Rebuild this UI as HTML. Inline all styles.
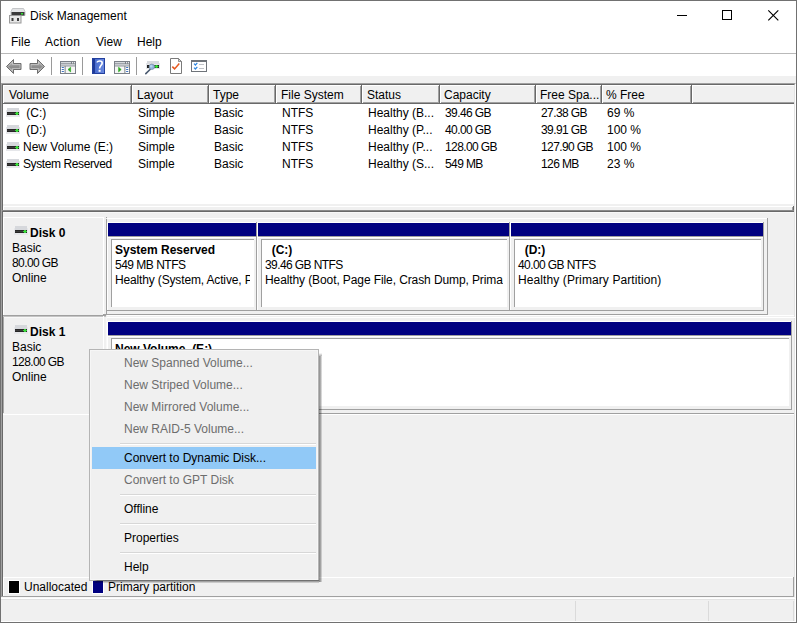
<!DOCTYPE html>
<html><head><meta charset="utf-8">
<style>
*{box-sizing:border-box;margin:0;padding:0}
html,body{width:797px;height:623px;overflow:hidden;background:#f0f0f0}
body{position:relative;font-family:"Liberation Sans",sans-serif;font-size:12px;color:#000}
.a{position:absolute}
.t{position:absolute;line-height:14px;white-space:nowrap}
.b{font-weight:bold}
.g{color:#6d6d6d}
svg{position:absolute;overflow:visible}
</style></head><body>

<div class="a" style="left:0px;top:0px;width:797px;height:623px;background:#f0f0f0;border:1px solid #717171"></div>
<div class="a" style="left:1px;top:1px;width:795px;height:75px;background:#fff"></div>
<div class="a" style="left:1px;top:53px;width:795px;height:1px;background:#b9b9b9"></div>
<svg style="left:9px;top:8px" width="17" height="16" viewBox="0 0 17 16">
<path d="M3.5 0.5h11l1.5 3v4h-14v-4z" fill="#e3e4e6" stroke="#c4c6c8" stroke-width="1"/>
<rect x="2.5" y="4" width="13" height="3.5" fill="#3a3a3a"/>
<rect x="12" y="5" width="2" height="1.5" fill="#2fe02f"/>
<rect x="0.5" y="7.5" width="11.5" height="7.5" fill="#e6e6e6" stroke="#9a9a9a"/>
<rect x="2.5" y="10" width="2" height="3" fill="#3c3c3c"/>
<rect x="8" y="10" width="2" height="3" fill="#3c3c3c"/>
</svg>
<div class="t" style="left:30px;top:9px;">Disk Management</div>
<div class="t" style="left:11px;top:35px;">File</div>
<div class="t" style="left:45px;top:35px;letter-spacing:0.3px">Action</div>
<div class="t" style="left:96px;top:35px;">View</div>
<div class="t" style="left:137px;top:35px;">Help</div>
<div class="a" style="left:677px;top:15px;width:10px;height:1px;background:#000"></div>
<div class="a" style="left:722px;top:10px;width:10px;height:10px;border:1px solid #000"></div>
<svg style="left:768px;top:10px" width="11" height="11" viewBox="0 0 11 11"><path d="M0.3 0.3L10.3 10.3M10.3 0.3L0.3 10.3" stroke="#000" stroke-width="1.15"/></svg>
<div class="a" style="left:51px;top:57px;width:1px;height:18px;background:#9a9a9a"></div>
<div class="a" style="left:82px;top:57px;width:1px;height:18px;background:#9a9a9a"></div>
<div class="a" style="left:136px;top:57px;width:1px;height:18px;background:#9a9a9a"></div>
<svg style="left:6px;top:59px" width="17" height="15" viewBox="0 0 17 15">
<defs><linearGradient id="ag" x1="0" y1="0" x2="0" y2="1"><stop offset="0" stop-color="#c8c8c8"/><stop offset="0.55" stop-color="#8a8a8a"/><stop offset="1" stop-color="#bdbdbd"/></linearGradient></defs>
<path d="M0.5 7.5L7.5 0.5V4.5H15V10.5H7.5V14.5Z" fill="url(#ag)" stroke="#6e6e6e" stroke-linejoin="round"/>
<path d="M2 7.5L6.5 3V5.5H14V9.5H6.5V12Z" fill="none" stroke="#e0e0e0" stroke-width="0.6" opacity="0.8"/></svg>
<svg style="left:28px;top:59px" width="17" height="15" viewBox="0 0 17 15">
<path d="M16.5 7.5L9.5 0.5V4.5H2V10.5H9.5V14.5Z" fill="url(#ag)" stroke="#6e6e6e" stroke-linejoin="round"/>
<path d="M15 7.5L10.5 3V5.5H3V9.5H10.5V12Z" fill="none" stroke="#e0e0e0" stroke-width="0.6" opacity="0.8"/></svg>
<svg style="left:60px;top:61px" width="16" height="13" viewBox="0 0 16 13">
<rect x="0" y="0" width="16" height="13" fill="#7b8088"/>
<rect x="1" y="1" width="10" height="1.4" fill="#d5d8dc"/>
<rect x="12" y="1" width="1.2" height="1.4" fill="#e8eaec"/><rect x="14" y="1" width="1" height="1.4" fill="#e8eaec"/>
<rect x="1" y="3.2" width="14" height="1.4" fill="#dadde0"/>
<rect x="1" y="5.4" width="3.6" height="6.6" fill="#fff"/>
<rect x="5.6" y="5.4" width="9.4" height="6.6" fill="#f6f6f6"/>
<rect x="1.6" y="6" width="2.4" height="1" rx="0.5" fill="#3f74c0"/><rect x="1.6" y="8" width="2.4" height="1" rx="0.5" fill="#3f74c0"/><rect x="1.6" y="10" width="2.4" height="1" rx="0.5" fill="#3f74c0"/>
<path d="M8 8.5L10.6 6.2V10.9Z" fill="#2aa81e" stroke="#2aa81e" stroke-width="0.6" stroke-linejoin="round"/></svg>
<svg style="left:114px;top:61px" width="16" height="13" viewBox="0 0 16 13">
<rect x="0" y="0" width="16" height="13" fill="#7b8088"/>
<rect x="1" y="1" width="10" height="1.4" fill="#d5d8dc"/>
<rect x="12" y="1" width="1.2" height="1.4" fill="#e8eaec"/><rect x="14" y="1" width="1" height="1.4" fill="#e8eaec"/>
<rect x="1" y="3.2" width="14" height="1.4" fill="#dadde0"/>
<rect x="11.4" y="5.4" width="3.6" height="6.6" fill="#fff"/>
<rect x="1" y="5.4" width="9.4" height="6.6" fill="#f6f6f6"/>
<rect x="12" y="6" width="2.4" height="1" rx="0.5" fill="#3f74c0"/><rect x="12" y="8" width="2.4" height="1" rx="0.5" fill="#3f74c0"/><rect x="12" y="10" width="2.4" height="1" rx="0.5" fill="#3f74c0"/>
<path d="M7.2 8.5L4.6 6.2V10.9Z" fill="#2aa81e" stroke="#2aa81e" stroke-width="0.6" stroke-linejoin="round"/></svg>
<svg style="left:92px;top:58px" width="13" height="16" viewBox="0 0 13 16">
<defs><linearGradient id="hg" x1="0" y1="0" x2="1" y2="0"><stop offset="0" stop-color="#3f63c8"/><stop offset="1" stop-color="#6a8ae0"/></linearGradient></defs>
<rect x="0.5" y="0.5" width="12" height="15" fill="url(#hg)" stroke="#23409e"/>
<rect x="1" y="1" width="2" height="14" fill="#1f3a98"/>
<path d="M5.2 4.6C5.2 2.4 10.2 2.3 10.2 4.9C10.2 7.2 7.6 7.4 7.6 10.6" fill="none" stroke="#fff" stroke-width="1.6"/>
<rect x="6.6" y="11.8" width="2" height="2" fill="#fff"/></svg>
<svg style="left:145px;top:61px" width="16" height="14" viewBox="0 0 16 14">
<rect x="1" y="2" width="14" height="6" fill="#e4e6ea"/>
<rect x="2" y="0" width="12" height="3" fill="#d8dade"/>
<rect x="2" y="4" width="12" height="3" fill="#1e1e1e"/>
<rect x="10.5" y="4" width="2" height="3" fill="#2fe02f"/><rect x="9.5" y="5" width="4" height="1" fill="#2fe02f"/>
<path d="M5.3 8.2L0.8 12.6" stroke="#4a5a70" stroke-width="1.6" stroke-linecap="round"/>
<circle cx="6.8" cy="5.8" r="2.7" fill="#8fb4dc" stroke="#7f93a8" stroke-width="0.8"/>
<circle cx="6.2" cy="5.2" r="1.2" fill="#b8d4ee"/></svg>
<svg style="left:170px;top:58px" width="12" height="16" viewBox="0 0 12 16">
<path d="M0.5 0.5H8.5L11.5 3.5V15.5H0.5Z" fill="#fff" stroke="#7a7a7a" stroke-linejoin="miter"/>
<path d="M8.5 0.5V3.5H11.5Z" fill="#d8d8d8" stroke="#7a7a7a" stroke-width="0.8"/>
<path d="M2.3 8.6L4.6 10.9L9.3 5.6" fill="none" stroke="#e8581e" stroke-width="1.5"/></svg>
<svg style="left:191px;top:60px" width="16" height="12" viewBox="0 0 16 12">
<rect x="0.5" y="0.5" width="15" height="11" fill="#fff" stroke="#6f747a"/>
<rect x="1" y="1" width="14" height="1" fill="#6f747a"/>
<path d="M3 3.6L4.4 5L6.3 2.8" fill="none" stroke="#2f86e0" stroke-width="1.2"/>
<path d="M3 7.6L4.4 9L6.3 6.8" fill="none" stroke="#2f86e0" stroke-width="1.2"/>
<rect x="8" y="4" width="5" height="1" fill="#c0c3c8"/><rect x="8" y="8" width="5" height="1" fill="#c0c3c8"/></svg>
<div class="a" style="left:1px;top:83px;width:795px;height:128px;border-top:1px solid #a0a0a0;border-left:1px solid #a0a0a0;border-right:1px solid #fff;background:#fff"></div>
<div class="a" style="left:2px;top:84px;width:793px;height:127px;border-top:1px solid #696969;border-left:1px solid #696969;border-right:1px solid #e3e3e3;background:#fff"></div>
<div class="a" style="left:3px;top:85px;width:791px;height:19px;background:#f0f0f0;border-top:1px solid #fff;border-bottom:1px solid #696969"></div>
<div class="a" style="left:3px;top:102px;width:791px;height:1px;background:#a0a0a0"></div>
<div class="a" style="left:130px;top:86px;width:1px;height:17px;background:#a0a0a0"></div>
<div class="a" style="left:131px;top:85px;width:1px;height:19px;background:#696969"></div>
<div class="a" style="left:132px;top:86px;width:1px;height:17px;background:#fff"></div>
<div class="a" style="left:207px;top:86px;width:1px;height:17px;background:#a0a0a0"></div>
<div class="a" style="left:208px;top:85px;width:1px;height:19px;background:#696969"></div>
<div class="a" style="left:209px;top:86px;width:1px;height:17px;background:#fff"></div>
<div class="a" style="left:274px;top:86px;width:1px;height:17px;background:#a0a0a0"></div>
<div class="a" style="left:275px;top:85px;width:1px;height:19px;background:#696969"></div>
<div class="a" style="left:276px;top:86px;width:1px;height:17px;background:#fff"></div>
<div class="a" style="left:360px;top:86px;width:1px;height:17px;background:#a0a0a0"></div>
<div class="a" style="left:361px;top:85px;width:1px;height:19px;background:#696969"></div>
<div class="a" style="left:362px;top:86px;width:1px;height:17px;background:#fff"></div>
<div class="a" style="left:438px;top:86px;width:1px;height:17px;background:#a0a0a0"></div>
<div class="a" style="left:439px;top:85px;width:1px;height:19px;background:#696969"></div>
<div class="a" style="left:440px;top:86px;width:1px;height:17px;background:#fff"></div>
<div class="a" style="left:534px;top:86px;width:1px;height:17px;background:#a0a0a0"></div>
<div class="a" style="left:535px;top:85px;width:1px;height:19px;background:#696969"></div>
<div class="a" style="left:536px;top:86px;width:1px;height:17px;background:#fff"></div>
<div class="a" style="left:600px;top:86px;width:1px;height:17px;background:#a0a0a0"></div>
<div class="a" style="left:601px;top:85px;width:1px;height:19px;background:#696969"></div>
<div class="a" style="left:602px;top:86px;width:1px;height:17px;background:#fff"></div>
<div class="a" style="left:690px;top:86px;width:1px;height:17px;background:#a0a0a0"></div>
<div class="a" style="left:691px;top:85px;width:1px;height:19px;background:#696969"></div>
<div class="a" style="left:692px;top:86px;width:1px;height:17px;background:#fff"></div>
<div class="a" style="left:3px;top:86px;width:1px;height:17px;background:#fff"></div>
<div class="t" style="left:9px;top:88px;">Volume</div>
<div class="t" style="left:137px;top:88px;">Layout</div>
<div class="t" style="left:213px;top:88px;">Type</div>
<div class="t" style="left:281px;top:88px;">File System</div>
<div class="t" style="left:367px;top:88px;">Status</div>
<div class="t" style="left:444px;top:88px;">Capacity</div>
<div class="t" style="left:540px;top:88px;">Free Spa...</div>
<div class="t" style="left:606px;top:88px;">% Free</div>
<svg style="left:6px;top:108px" width="14" height="9" viewBox="0 0 14 9">
<rect x="0" y="2" width="14" height="7" fill="#e6e7ea"/>
<rect x="1" y="0" width="12" height="4" fill="#d6d8dc"/>
<rect x="1" y="4" width="12" height="3" fill="#262626"/>
<rect x="1" y="5" width="8" height="0.6" fill="#4a4a4a"/>
<rect x="10" y="4" width="2" height="3" fill="#39d839"/><rect x="9" y="5" width="4" height="1" fill="#39d839"/></svg>
<div class="t" style="left:23px;top:106px;">&nbsp;(C:)</div>
<div class="t" style="left:138px;top:106px;">Simple</div>
<div class="t" style="left:214px;top:106px;">Basic</div>
<div class="t" style="left:282px;top:106px;">NTFS</div>
<div class="t" style="left:368px;top:106px;">Healthy (B...</div>
<div class="t" style="left:445px;top:106px;letter-spacing:-0.6px">39.46 GB</div>
<div class="t" style="left:541px;top:106px;letter-spacing:-0.6px">27.38 GB</div>
<div class="t" style="left:607px;top:106px;">69 %</div>
<svg style="left:6px;top:125px" width="14" height="9" viewBox="0 0 14 9">
<rect x="0" y="2" width="14" height="7" fill="#e6e7ea"/>
<rect x="1" y="0" width="12" height="4" fill="#d6d8dc"/>
<rect x="1" y="4" width="12" height="3" fill="#262626"/>
<rect x="1" y="5" width="8" height="0.6" fill="#4a4a4a"/>
<rect x="10" y="4" width="2" height="3" fill="#39d839"/><rect x="9" y="5" width="4" height="1" fill="#39d839"/></svg>
<div class="t" style="left:23px;top:123px;">&nbsp;(D:)</div>
<div class="t" style="left:138px;top:123px;">Simple</div>
<div class="t" style="left:214px;top:123px;">Basic</div>
<div class="t" style="left:282px;top:123px;">NTFS</div>
<div class="t" style="left:368px;top:123px;">Healthy (P...</div>
<div class="t" style="left:445px;top:123px;letter-spacing:-0.6px">40.00 GB</div>
<div class="t" style="left:541px;top:123px;letter-spacing:-0.6px">39.91 GB</div>
<div class="t" style="left:607px;top:123px;">100 %</div>
<svg style="left:6px;top:142px" width="14" height="9" viewBox="0 0 14 9">
<rect x="0" y="2" width="14" height="7" fill="#e6e7ea"/>
<rect x="1" y="0" width="12" height="4" fill="#d6d8dc"/>
<rect x="1" y="4" width="12" height="3" fill="#262626"/>
<rect x="1" y="5" width="8" height="0.6" fill="#4a4a4a"/>
<rect x="10" y="4" width="2" height="3" fill="#39d839"/><rect x="9" y="5" width="4" height="1" fill="#39d839"/></svg>
<div class="t" style="left:23px;top:140px;">New Volume&nbsp;(E:)</div>
<div class="t" style="left:138px;top:140px;">Simple</div>
<div class="t" style="left:214px;top:140px;">Basic</div>
<div class="t" style="left:282px;top:140px;">NTFS</div>
<div class="t" style="left:368px;top:140px;">Healthy (P...</div>
<div class="t" style="left:445px;top:140px;letter-spacing:-0.6px">128.00 GB</div>
<div class="t" style="left:541px;top:140px;letter-spacing:-0.6px">127.90 GB</div>
<div class="t" style="left:607px;top:140px;">100 %</div>
<svg style="left:6px;top:159px" width="14" height="9" viewBox="0 0 14 9">
<rect x="0" y="2" width="14" height="7" fill="#e6e7ea"/>
<rect x="1" y="0" width="12" height="4" fill="#d6d8dc"/>
<rect x="1" y="4" width="12" height="3" fill="#262626"/>
<rect x="1" y="5" width="8" height="0.6" fill="#4a4a4a"/>
<rect x="10" y="4" width="2" height="3" fill="#39d839"/><rect x="9" y="5" width="4" height="1" fill="#39d839"/></svg>
<div class="t" style="left:23px;top:157px;letter-spacing:-0.4px">System Reserved</div>
<div class="t" style="left:138px;top:157px;">Simple</div>
<div class="t" style="left:214px;top:157px;">Basic</div>
<div class="t" style="left:282px;top:157px;">NTFS</div>
<div class="t" style="left:368px;top:157px;">Healthy (S...</div>
<div class="t" style="left:445px;top:157px;letter-spacing:-0.6px">549 MB</div>
<div class="t" style="left:541px;top:157px;letter-spacing:-0.6px">126 MB</div>
<div class="t" style="left:607px;top:157px;">23 %</div>
<div class="a" style="left:3px;top:204px;width:791px;height:2px;background:#f0f0f0"></div>
<div class="a" style="left:3px;top:206px;width:790px;height:1px;background:#fff"></div>
<div class="a" style="left:3px;top:207px;width:790px;height:3px;background:#f0f0f0"></div>
<div class="a" style="left:3px;top:206px;width:1px;height:4px;background:#fff"></div>
<div class="a" style="left:792px;top:207px;width:1px;height:3px;background:#a0a0a0"></div>
<div class="a" style="left:793px;top:206px;width:1px;height:6px;background:#696969"></div>
<div class="a" style="left:1px;top:210px;width:793px;height:1px;background:#8a8a8a"></div>
<div class="a" style="left:1px;top:211px;width:793px;height:1px;background:#696969"></div>
<div class="a" style="left:1px;top:210px;width:1px;height:387px;background:#a0a0a0"></div>
<div class="a" style="left:2px;top:211px;width:1px;height:386px;background:#696969"></div>
<div class="a" style="left:795px;top:210px;width:1px;height:387px;background:#fff"></div>
<div class="a" style="left:794px;top:204px;width:1px;height:393px;background:#e3e3e3"></div>
<div class="a" style="left:3px;top:212px;width:791px;height:1px;background:#f8f8f8"></div>
<div class="a" style="left:3px;top:217px;width:101px;height:1px;background:#fff"></div>
<div class="a" style="left:3px;top:217px;width:1px;height:98px;background:#fff"></div>
<div class="a" style="left:103px;top:217px;width:1px;height:97px;background:#fff"></div>
<div class="a" style="left:3px;top:315px;width:103px;height:1px;background:#a0a0a0"></div>
<div class="a" style="left:3px;top:316px;width:103px;height:1px;background:#c4c4c4"></div>
<svg style="left:14px;top:226px" width="14" height="9" viewBox="0 0 14 9">
<rect x="0" y="2" width="14" height="7" fill="#e6e7ea"/>
<rect x="1" y="0" width="12" height="4" fill="#d6d8dc"/>
<rect x="1" y="4" width="12" height="3" fill="#262626"/>
<rect x="1" y="5" width="8" height="0.6" fill="#4a4a4a"/>
<rect x="10" y="4" width="2" height="3" fill="#39d839"/><rect x="9" y="5" width="4" height="1" fill="#39d839"/></svg>
<div class="t" style="left:30px;top:226px;font-weight:bold">Disk 0</div>
<div class="t" style="left:12px;top:241px;">Basic</div>
<div class="t" style="left:12px;top:256px;letter-spacing:-0.6px">80.00 GB</div>
<div class="t" style="left:12px;top:271px;">Online</div>
<div class="a" style="left:106px;top:217px;width:1px;height:1px;background:#a0a0a0"></div>
<div class="a" style="left:106px;top:219px;width:1px;height:96px;background:#a0a0a0"></div>
<div class="a" style="left:107px;top:315px;width:687px;height:1px;background:#fff"></div>
<div class="a" style="left:107px;top:218px;width:660px;height:1px;background:#fff"></div>
<div class="a" style="left:767px;top:218px;width:1px;height:97px;background:#a0a0a0"></div>
<div class="a" style="left:103px;top:314px;width:665px;height:1px;background:#a0a0a0"></div>
<div class="a" style="left:107px;top:222px;width:656px;height:1px;background:#fff"></div>
<div class="a" style="left:107px;top:310px;width:657px;height:1px;background:#a0a0a0"></div>
<div class="a" style="left:107px;top:222px;width:1px;height:88px;background:#fff"></div>
<div class="a" style="left:256px;top:222px;width:1px;height:88px;background:#a0a0a0"></div>
<div class="a" style="left:108px;top:223px;width:148px;height:13px;background:#000080"></div>
<div class="a" style="left:108px;top:236px;width:148px;height:1px;background:#a0a0a0"></div>
<div class="a" style="left:108px;top:237px;width:148px;height:1px;background:#fff"></div>
<div class="a" style="left:111px;top:239px;width:143px;height:68px;background:#fff;border-top:1px solid #a0a0a0;border-left:1px solid #a0a0a0"></div>
<div class="a" style="left:112px;top:239px;width:138px;height:66px;overflow:hidden"><div class="t b" style="left:3px;top:4px">System Reserved</div><div class="t" style="left:3px;top:19px;letter-spacing:-0.5px">549 MB NTFS</div><div class="t" style="left:3px;top:34px;letter-spacing:-0.15px">Healthy (System, Active, Primary Partition)</div></div>
<div class="a" style="left:257px;top:222px;width:1px;height:88px;background:#fff"></div>
<div class="a" style="left:509px;top:222px;width:1px;height:88px;background:#a0a0a0"></div>
<div class="a" style="left:258px;top:223px;width:251px;height:13px;background:#000080"></div>
<div class="a" style="left:258px;top:236px;width:251px;height:1px;background:#a0a0a0"></div>
<div class="a" style="left:258px;top:237px;width:251px;height:1px;background:#fff"></div>
<div class="a" style="left:261px;top:239px;width:246px;height:68px;background:#fff;border-top:1px solid #a0a0a0;border-left:1px solid #a0a0a0"></div>
<div class="a" style="left:262px;top:239px;width:241px;height:66px;overflow:hidden"><div class="t b" style="left:3px;top:4px">&nbsp;&nbsp;(C:)</div><div class="t" style="left:3px;top:19px;letter-spacing:-0.6px">39.46 GB NTFS</div><div class="t" style="left:3px;top:34px;letter-spacing:-0.1px">Healthy (Boot, Page File, Crash Dump, Primary Partition)</div></div>
<div class="a" style="left:510px;top:222px;width:1px;height:88px;background:#fff"></div>
<div class="a" style="left:763px;top:222px;width:1px;height:88px;background:#a0a0a0"></div>
<div class="a" style="left:511px;top:223px;width:252px;height:13px;background:#000080"></div>
<div class="a" style="left:511px;top:236px;width:252px;height:1px;background:#a0a0a0"></div>
<div class="a" style="left:511px;top:237px;width:252px;height:1px;background:#fff"></div>
<div class="a" style="left:514px;top:239px;width:247px;height:68px;background:#fff;border-top:1px solid #a0a0a0;border-left:1px solid #a0a0a0"></div>
<div class="a" style="left:515px;top:239px;width:242px;height:66px;overflow:hidden"><div class="t b" style="left:3px;top:4px">&nbsp;&nbsp;(D:)</div><div class="t" style="left:3px;top:19px;letter-spacing:-0.6px">40.00 GB NTFS</div><div class="t" style="left:3px;top:34px;letter-spacing:0.1px">Healthy (Primary Partition)</div></div>
<div class="a" style="left:3px;top:317px;width:101px;height:1px;background:#f8f8f8"></div>
<div class="a" style="left:3px;top:317px;width:1px;height:97px;background:#a8a8a8"></div>
<div class="a" style="left:103px;top:316px;width:1px;height:97px;background:#fff"></div>
<div class="a" style="left:3px;top:413px;width:1px;height:1px;background:#f0f0f0"></div>
<div class="a" style="left:3px;top:414px;width:791px;height:1px;background:#fff"></div>
<svg style="left:14px;top:325px" width="14" height="9" viewBox="0 0 14 9">
<rect x="0" y="2" width="14" height="7" fill="#e6e7ea"/>
<rect x="1" y="0" width="12" height="4" fill="#d6d8dc"/>
<rect x="1" y="4" width="12" height="3" fill="#262626"/>
<rect x="1" y="5" width="8" height="0.6" fill="#4a4a4a"/>
<rect x="10" y="4" width="2" height="3" fill="#39d839"/><rect x="9" y="5" width="4" height="1" fill="#39d839"/></svg>
<div class="t" style="left:30px;top:325px;font-weight:bold">Disk 1</div>
<div class="t" style="left:12px;top:340px;">Basic</div>
<div class="t" style="left:12px;top:355px;letter-spacing:-0.6px">128.00 GB</div>
<div class="t" style="left:12px;top:370px;">Online</div>
<div class="a" style="left:106px;top:317px;width:1px;height:96px;background:#f8f8f8"></div>
<div class="a" style="left:107px;top:317px;width:688px;height:1px;background:#fff"></div>
<div class="a" style="left:103px;top:413px;width:691px;height:1px;background:#a0a0a0"></div>
<div class="a" style="left:107px;top:321px;width:684px;height:1px;background:#fff"></div>
<div class="a" style="left:107px;top:409px;width:685px;height:1px;background:#a0a0a0"></div>
<div class="a" style="left:107px;top:321px;width:1px;height:88px;background:#fff"></div>
<div class="a" style="left:791px;top:321px;width:1px;height:88px;background:#a0a0a0"></div>
<div class="a" style="left:108px;top:322px;width:683px;height:13px;background:#000080"></div>
<div class="a" style="left:108px;top:335px;width:683px;height:1px;background:#a0a0a0"></div>
<div class="a" style="left:108px;top:336px;width:683px;height:1px;background:#fff"></div>
<div class="a" style="left:111px;top:338px;width:678px;height:68px;background:#fff;border-top:1px solid #a0a0a0;border-left:1px solid #a0a0a0"></div>
<div class="a" style="left:112px;top:338px;width:673px;height:66px;overflow:hidden"><div class="t b" style="left:3px;top:4px">New Volume&nbsp;&nbsp;(E:)</div><div class="t" style="left:3px;top:19px;letter-spacing:-0.6px">128.00 GB NTFS</div><div class="t" style="left:3px;top:34px;letter-spacing:0.1px">Healthy (Primary Partition)</div></div>
<div class="a" style="left:3px;top:577px;width:791px;height:1px;background:#fff"></div>
<div class="a" style="left:3px;top:577px;width:1px;height:19px;background:#fff"></div>
<div class="a" style="left:793px;top:577px;width:1px;height:19px;background:#a0a0a0"></div>
<div class="a" style="left:1px;top:596px;width:793px;height:1px;background:#a0a0a0"></div>
<div class="a" style="left:1px;top:597px;width:795px;height:1px;background:#f8f8f8"></div>
<div class="a" style="left:8px;top:580px;width:12px;height:14px;background:#000;border:1px solid #fff"></div>
<div class="t" style="left:24px;top:580px;">Unallocated</div>
<div class="a" style="left:92px;top:580px;width:12px;height:14px;background:#000080;border:1px solid #fff"></div>
<div class="t" style="left:108px;top:580px;">Primary partition</div>
<div class="a" style="left:1px;top:598px;width:795px;height:1px;background:#fff"></div>
<div class="a" style="left:1px;top:599px;width:795px;height:1px;background:#e3e3e3"></div>
<div class="a" style="left:1px;top:600px;width:795px;height:22px;background:#f0f0f0"></div>
<div class="a" style="left:795px;top:598px;width:1px;height:24px;background:#fff"></div>
<div class="a" style="left:1px;top:621px;width:795px;height:1px;background:#fff"></div>
<div class="a" style="left:575px;top:601px;width:1px;height:20px;background:#dadada"></div>
<div class="a" style="left:708px;top:601px;width:1px;height:20px;background:#dadada"></div>
<div class="a" style="left:793px;top:601px;width:1px;height:20px;background:#dadada"></div>
<div class="a" style="left:89px;top:349px;width:230px;height:232px;background:#f0f0f0;border:1px solid #b4b4b4"></div>
<div class="a" style="left:90px;top:350px;width:228px;height:230px;border:1px solid #f6f6f6"></div>
<div class="a" style="left:319px;top:356px;width:3px;height:226px;background:linear-gradient(to right,rgba(0,0,0,.45),rgba(0,0,0,.32) 50%,rgba(0,0,0,.08))"></div>
<div class="a" style="left:319px;top:353px;width:3px;height:3px;background:linear-gradient(to bottom,rgba(0,0,0,0),rgba(0,0,0,.3))"></div>
<div class="a" style="left:97px;top:580px;width:222px;height:3px;background:linear-gradient(to bottom,rgba(0,0,0,.40),rgba(0,0,0,.32) 50%,rgba(0,0,0,.08))"></div>
<div class="a" style="left:93px;top:580px;width:4px;height:3px;background:linear-gradient(to right,rgba(0,0,0,0),rgba(0,0,0,.3))"></div>
<div class="a" style="left:92px;top:447px;width:224px;height:22px;background:#91c9f7"></div>
<div class="a" style="left:120px;top:443px;width:196px;height:1px;background:#d7d7d7"></div>
<div class="a" style="left:120px;top:444px;width:196px;height:1px;background:#fff"></div>
<div class="a" style="left:120px;top:494px;width:196px;height:1px;background:#d7d7d7"></div>
<div class="a" style="left:120px;top:495px;width:196px;height:1px;background:#fff"></div>
<div class="a" style="left:120px;top:523px;width:196px;height:1px;background:#d7d7d7"></div>
<div class="a" style="left:120px;top:524px;width:196px;height:1px;background:#fff"></div>
<div class="a" style="left:120px;top:552px;width:196px;height:1px;background:#d7d7d7"></div>
<div class="a" style="left:120px;top:553px;width:196px;height:1px;background:#fff"></div>
<div class="t" style="left:124px;top:356px;color:#6d6d6d">New Spanned Volume...</div>
<div class="t" style="left:124px;top:378px;color:#6d6d6d">New Striped Volume...</div>
<div class="t" style="left:124px;top:400px;color:#6d6d6d">New Mirrored Volume...</div>
<div class="t" style="left:124px;top:422px;color:#6d6d6d">New RAID-5 Volume...</div>
<div class="t" style="left:124px;top:451px;">Convert to Dynamic Disk...</div>
<div class="t" style="left:124px;top:473px;color:#6d6d6d">Convert to GPT Disk</div>
<div class="t" style="left:124px;top:502px;">Offline</div>
<div class="t" style="left:124px;top:531px;">Properties</div>
<div class="t" style="left:124px;top:560px;">Help</div>
</body></html>
